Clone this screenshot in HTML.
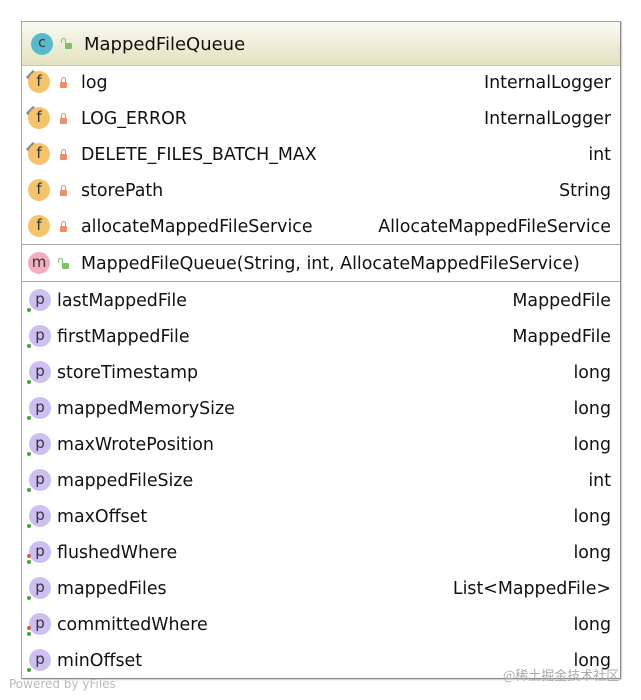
<!DOCTYPE html>
<html><head><style>
body{margin:0;width:641px;height:700px;background:#fff;font-family:"DejaVu Sans","Liberation Sans",sans-serif;position:relative;overflow:hidden}
.box{position:absolute;left:21px;top:21px;width:598px;height:656px;border:1px solid #a8a8a8;border-right-color:#888;border-bottom-color:#888;box-shadow:1px 1px 1px #ccc}
.hdr{position:absolute;left:0;top:0;width:598px;height:43px;background:linear-gradient(#fafaf3,#e2e2c0);border-bottom:1px solid #c8c8b8}
.row{position:absolute;left:0;width:598px;height:36px;font-size:17.4px;color:#111;line-height:38px}
.row .n{position:absolute;top:0}
.row .t{position:absolute;right:9px;top:0}
.ic{position:absolute;width:22px;height:22px;border-radius:50%;font-size:15px;line-height:21px;text-align:center;color:#333}
.sep{position:absolute;left:0;width:598px;height:1px;background:#aaa}
.lock{position:absolute;width:7px;height:6px;background:#e8906a;border-radius:1px}
.lock:before{content:"";position:absolute;left:1px;top:-5px;width:3px;height:4px;border:1px solid #e8906a;border-bottom:none;border-radius:3px 3px 0 0}
.ulock{position:absolute;width:7px;height:6px;background:#7cbf6a;border-radius:1px}
.ulock:before{content:"";position:absolute;left:-4px;top:-5px;width:3px;height:4px;border:1px solid #7cbf6a;border-bottom:none;border-radius:3px 3px 0 0}
.dot{position:absolute;width:4px;height:4px;border-radius:50%}
.wm{position:absolute;font-size:12px;color:#bbb}
</style></head><body>
<div class="box">
<div class="hdr">
<div class="ic" style="left:9px;top:11px;background:#5ab8cc;font-size:14px">c</div>
<div class="ulock" style="left:43px;top:21px"></div>
<div style="position:absolute;left:62px;top:1px;line-height:43px;font-size:18px;color:#111">MappedFileQueue</div>
</div>
</div>
<div id="rows"></div>
<div class="wm" style="left:9px;top:677px">Powered by yFiles</div>
<div class="wm" style="left:503px;top:665px;font-family:'Noto Sans CJK SC',sans-serif;font-size:13px;color:#aaa">@稀土掘金技术社区</div>
<script>
var f=[["log","InternalLogger",1],["LOG_ERROR","InternalLogger",1],["DELETE_FILES_BATCH_MAX","int",1],["storePath","String",0],["allocateMappedFileService","AllocateMappedFileService",0]];
var p=[["lastMappedFile","MappedFile",0],["firstMappedFile","MappedFile",0],["storeTimestamp","long",0],["mappedMemorySize","long",0],["maxWrotePosition","long",0],["mappedFileSize","int",0],["maxOffset","long",0],["flushedWhere","long",1],["mappedFiles","List<MappedFile>",0],["committedWhere","long",1],["minOffset","long",0]];
var h="";
function esc(s){return s.replace(/</g,"&lt;").replace(/>/g,"&gt;")}
f.forEach(function(r,i){var y=64+i*36;
h+='<div class="row" style="left:22px;top:'+y+'px">'+
(r[2]?'<div style="position:absolute;left:6px;top:8px;width:10px;height:10px;background:#8a8a8a;transform:rotate(45deg)"></div>':'')+
'<div class="ic" style="left:6px;top:7px;background:#f5c46a">f</div>'+
'<div class="lock" style="left:38px;top:18px"></div>'+
'<div class="n" style="left:59px">'+r[0]+'</div><div class="t">'+r[1]+'</div></div>';});
h+='<div class="sep" style="left:22px;top:244px"></div>';
h+='<div class="row" style="left:22px;top:245px"><div class="ic" style="left:6px;top:7px;background:#f2aebc">m</div><div class="ulock" style="left:40px;top:18px"></div><div class="n" style="left:59px">MappedFileQueue(String, int, AllocateMappedFileService)</div></div>';
h+='<div class="sep" style="left:22px;top:281px"></div>';
p.forEach(function(r,i){var y=282+i*36;
h+='<div class="row" style="left:22px;top:'+y+'px">'+
'<div class="ic" style="left:7px;top:7px;background:#cdbff2">p</div>'+
'<div class="dot" style="left:5px;top:26px;background:#4aa43a"></div>'+
(r[2]?'<div class="dot" style="left:5px;top:20px;background:#e0603a"></div>':'')+
'<div class="n" style="left:35px">'+r[0]+'</div><div class="t">'+esc(r[1])+'</div></div>';});
document.getElementById("rows").innerHTML=h;
</script>
</body></html>
